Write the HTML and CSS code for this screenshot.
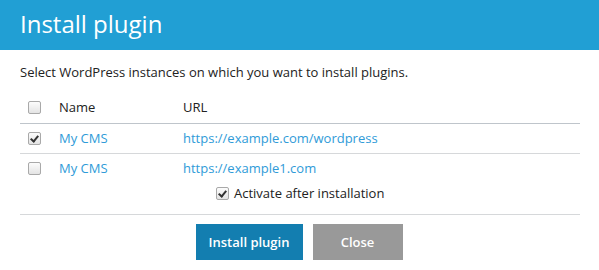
FILE: index.html
```html
<!DOCTYPE html>
<html>
<head>
<meta charset="utf-8">
<link rel="stylesheet" href="styles.css">
</head>
<body>
<div class="dialog">
  <div class="header"><h1 class="title">Install plugin</h1></div>
  <div class="content">
    <p class="intro">Select WordPress instances on which you want to install plugins.</p>
    <table class="list">
      <thead>
        <tr>
          <th class="c-check"><span class="cb"></span></th>
          <th class="c-name">Name</th>
          <th class="c-url">URL</th>
        </tr>
      </thead>
      <tbody>
        <tr>
          <td class="c-check"><span class="cb checked"></span></td>
          <td class="c-name"><a class="link">My CMS</a></td>
          <td class="c-url"><a class="link">https://example.com/wordpress</a></td>
        </tr>
        <tr class="last">
          <td class="c-check"><span class="cb"></span></td>
          <td class="c-name"><a class="link">My CMS</a></td>
          <td class="c-url"><a class="link">https://example1.com</a></td>
        </tr>
      </tbody>
    </table>
    <div class="activate"><span class="cb checked"></span><span>Activate after installation</span></div>
    <div class="footer">
      <button class="btn primary">Install plugin</button>
      <button class="btn secondary">Close</button>
    </div>
  </div>
</div>
</body>
</html>
```
FILE: styles.css
```css
* { box-sizing: border-box; }
html, body { margin: 0; padding: 0; background: #fff; }
body { font-family: "Open Sans", sans-serif; color: #222; font-size: 13px; }
.header { background: #219fd4; height: 50px; padding: 0 20px; display: flex; align-items: center; }
.title { margin: 0; color: #fff; font-weight: 400; font-size: 24px; line-height: 1; position: relative; top: -1px; }
.content { padding: 0 19px 0 20px; }
.intro { margin: 13px 0 0; line-height: 18px; }
.list { width: 100%; border-collapse: collapse; margin-top: 11px; }
.list th, .list td { text-align: left; font-weight: 400; padding: 0; height: 30px; vertical-align: middle; }
.list thead th { height: 31px; border-bottom: 1px solid #bfc5cb; }
.list tbody tr td { border-bottom: 1px solid #d6d8da; }
.list tbody tr.last td { border-bottom: none; }
.c-check { width: 39px; padding-left: 8px !important; }
.c-name { width: 124px; }
.link { color: #2f9bd8; text-decoration: none; }
.cb { display: inline-block; width: 13px; height: 13px; border: 1px solid #a9a9a9; border-radius: 2px; background: linear-gradient(#fcfcfc, #e4e4e4); vertical-align: middle; position: relative; top: -1px; }
.cb.checked::after { content: ""; position: absolute; left: 3px; top: 1px; width: 3px; height: 6px; border: solid #333; border-width: 0 2px 2px 0; transform: rotate(40deg); }
.activate { display: flex; align-items: center; gap: 5px; padding-left: 196px; height: 22px; margin-top: -1px; }
.activate .cb { top: 0; }
.footer { border-top: 1px solid #d6d8da; margin-top: 10px; padding-top: 9px; display: flex; justify-content: center; gap: 10px; padding-right: 2px; }
.btn { font-family: "Open Sans", sans-serif; font-size: 13px; font-weight: 600; color: #fff; border: none; height: 36px; padding: 0; cursor: pointer; }
.primary { background: #137eb0; width: 107px; }
.secondary { background: #999; width: 90px; }
```
